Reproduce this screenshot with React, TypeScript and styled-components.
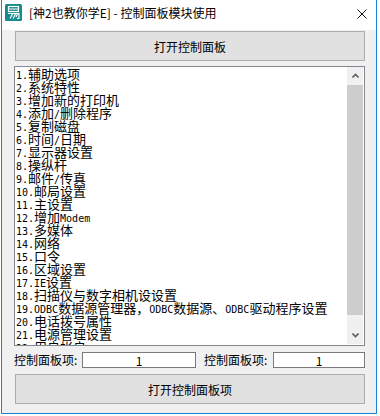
import * as React from 'react';
import styled, { createGlobalStyle } from 'styled-components';

const GlobalStyle = createGlobalStyle`
  html, body {
    margin: 0;
    padding: 0;
    background: #ffffff;
  }
  body {
    font-family: "Noto Sans CJK SC", "Noto Sans", sans-serif;
    font-size: 12px;
    color: #000;
  }
`;

const Window = styled.div`
  box-sizing: border-box;
  width: 376px;
  height: 414px;
  margin-left: 1px;
  border: 1px solid #1883d7;
  border-top: none;
  background: #f0f0f0;
  display: flex;
  flex-direction: column;
`;

const TitleBar = styled.div`
  height: 30px;
  flex: none;
  background: #ffffff;
  display: flex;
  align-items: flex-start;
  padding: 4px 0 0 3px;
  box-sizing: border-box;
`;

const Title = styled.div`
  margin-left: 7px;
  font-size: 12px;
  line-height: 18px;
  white-space: nowrap;
  flex: 1;
`;

const CloseBtn = styled.div`
  width: 10px;
  height: 10px;
  margin: 5px 9px 0 0;
  display: flex;
`;

const Client = styled.div`
  flex: 1;
  display: flex;
  flex-direction: column;
  padding: 1px 11px 0 12px;
`;

const Button = styled.div<{ $mt: number }>`
  box-sizing: border-box;
  margin: ${p => p.$mt}px 0 0 1px;
  width: 350px;
  height: 30px;
  border: 1px solid #adadad;
  background: #e1e1e1;
  display: flex;
  align-items: center;
  justify-content: center;
  font-size: 12px;
`;

const ListBox = styled.div`
  box-sizing: border-box;
  margin-top: 5px;
  width: 351px;
  height: 280px;
  border: 1px solid #828790;
  background: #ffffff;
  display: flex;
`;

const Items = styled.div`
  flex: 1;
  overflow: hidden;
  padding-left: 1px;
`;

const Item = styled.div`
  height: 13px;
  line-height: 13px;
  white-space: nowrap;
`;

const Run = styled.span<{ $latin: boolean }>`
  font-family: ${p => (p.$latin ? '"DejaVu Sans Mono", monospace' : '"Noto Sans CJK SC", sans-serif')};
  font-size: ${p => (p.$latin ? '10px' : '13px')};
  line-height: 13px;
`;

const ScrollBar = styled.div`
  width: 16px;
  margin: 0 1px 1px 0;
  background: #f0f0f0;
  display: flex;
  flex-direction: column;
`;

const Arrow = styled.div`
  height: 17px;
  flex: none;
  display: flex;
  align-items: center;
  justify-content: center;
`;

const Track = styled.div`
  flex: 1;
  padding-top: 1px;
`;

const Thumb = styled.div`
  height: 230px;
  background: #cdcdcd;
`;

const FieldRow = styled.div`
  margin-top: 6px;
  height: 16px;
  display: flex;
  align-items: center;
`;

const Label = styled.div<{ $w: number; $ml?: number }>`
  width: ${p => p.$w}px;
  margin-left: ${p => p.$ml ?? 0}px;
  font-size: 12px;
  line-height: 16px;
  white-space: nowrap;
`;

const Field = styled.input<{ $w: number }>`
  box-sizing: border-box;
  width: ${p => p.$w}px;
  height: 16px;
  margin: 0;
  padding: 0;
  border: 1px solid #7a7a7a;
  background: #fff;
  text-align: center;
  font-family: "Noto Sans CJK SC", sans-serif;
  font-size: 12px;
  color: #000;
  outline: none;
`;

const items = [
  '1.辅助选项',
  '2.系统特性',
  '3.增加新的打印机',
  '4.添加/删除程序',
  '5.复制磁盘',
  '6.时间/日期',
  '7.显示器设置',
  '8.操纵杆',
  '9.邮件/传真',
  '10.邮局设置',
  '11.主设置',
  '12.增加Modem',
  '13.多媒体',
  '14.网络',
  '15.口令',
  '16.区域设置',
  '17.IE设置',
  '18.扫描仪与数字相机设设置',
  '19.ODBC数据源管理器，ODBC数据源、ODBC驱动程序设置',
  '20.电话拨号属性',
  '21.电源管理设置',
  '22.用户帐户',
];

const splitRuns = (text: string) => text.match(/[\x00-\x7f]+|[^\x00-\x7f]+/g) ?? [];

const AppIcon = () => (
  <svg width="17" height="17" viewBox="0 0 17 17">
    <rect x="0" y="0" width="17" height="17" rx="1.5" fill="#168a8c" />
    <rect x="3.5" y="2.5" width="10" height="5" fill="none" stroke="#fff" strokeWidth="1.2" />
    <line x1="3.5" y1="5" x2="13.5" y2="5" stroke="#fff" strokeWidth="1" />
    <path d="M3 9.5 H14 V14.5 H12" fill="none" stroke="#fff" strokeWidth="1.2" />
    <path d="M5 14.5 L7.5 10 M8 14.5 L10.5 10 M11 13 L12.5 10" stroke="#fff" strokeWidth="1.2" />
  </svg>
);

const Chevron = ({ down }: { down?: boolean }) => (
  <svg width="7" height="5" viewBox="0 0 7 5">
    <path d={down ? 'M0.5 0.5 L3.5 3.5 L6.5 0.5' : 'M0.5 4.5 L3.5 1.5 L6.5 4.5'} fill="none" stroke="#606060" strokeWidth="1.6" />
  </svg>
);

export default function App() {
  return (
    <>
      <GlobalStyle />
      <Window>
        <TitleBar>
          <AppIcon />
          <Title>[神2也教你学E] - 控制面板模块使用</Title>
          <CloseBtn>
            <svg width="10" height="10" viewBox="0 0 10 10">
              <path d="M0.5 0.5 L9.5 9.5 M9.5 0.5 L0.5 9.5" stroke="#111" strokeWidth="1" />
            </svg>
          </CloseBtn>
        </TitleBar>
        <Client>
          <Button $mt={0}>打开控制面板</Button>
          <ListBox>
            <Items>
              {items.map(text => (
                <Item key={text}>
                  {splitRuns(text).map((r, i) => (
                    <Run key={i} $latin={/^[\x00-\x7f]/.test(r)}>{r}</Run>
                  ))}
                </Item>
              ))}
            </Items>
            <ScrollBar>
              <Arrow><Chevron /></Arrow>
              <Track><Thumb /></Track>
              <Arrow><Chevron down /></Arrow>
            </ScrollBar>
          </ListBox>
          <FieldRow>
            <Label $w={68}>控制面板项:</Label>
            <Field $w={114} readOnly value="1" />
            <Label $w={69} $ml={8}>控制面板项:</Label>
            <Field $w={92} readOnly value="1" />
          </FieldRow>
          <Button $mt={6}>打开控制面板项</Button>
        </Client>
      </Window>
    </>
  );
}
